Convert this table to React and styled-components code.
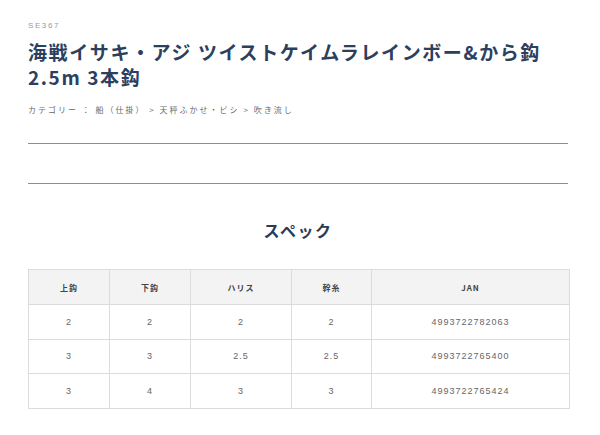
import React from "react";
import styled, { createGlobalStyle } from "styled-components";

const Global = createGlobalStyle`
  html, body { margin: 0; padding: 0; background: #fff; }
  body { font-family: "Noto Sans CJK JP", "Noto Sans", sans-serif; }
`;

const Page = styled.div`
  width: 600px;
  height: 435px;
  box-sizing: border-box;
  padding: 21px 32px 0 28px;
  display: flex;
  flex-direction: column;
`;

const Code = styled.div`
  font-family: "Liberation Sans", sans-serif;
  font-size: 8px;
  letter-spacing: 1.6px;
  color: #9a9a9a;
  line-height: 10px;
`;

const Title = styled.h1`
  margin: 8px 0 0;
  font-family: "Noto Sans CJK JP", sans-serif;
  font-weight: 700;
  font-size: 19px;
  line-height: 25px;
  letter-spacing: 1.6px;
  color: #2c405e;
`;

const Category = styled.div`
  margin-top: 15px;
  font-size: 8px;
  letter-spacing: 2px;
  color: #6a6a6a;
  line-height: 12px;
`;

const Rule = styled.hr`
  margin: ${(p) => p.$mt}px 0 0;
  border: 0;
  border-top: 1px solid #8d8d8d;
  width: 540px;
`;

const SpecTitle = styled.h2`
  margin: 36px 0 0;
  text-align: center;
  width: 540px;
  font-size: 16px;
  font-weight: 700;
  letter-spacing: 1.5px;
  line-height: 20px;
  color: #2c3b55;
`;

const Table = styled.table`
  margin-top: 29px;
  width: 541px;
  border-collapse: collapse;
  table-layout: fixed;
`;

const Th = styled.th`
  background: #f3f3f3;
  border: 1px solid #dcdcdc;
  height: 34px;
  padding: 0;
  font-size: 8px;
  font-weight: 700;
  letter-spacing: 1px;
  color: #444;
  text-align: center;
`;

const Td = styled.td`
  border: 1px solid #dcdcdc;
  height: 33.5px;
  padding: 0;
  font-family: "Liberation Sans", sans-serif;
  font-size: 9px;
  letter-spacing: 1px;
  color: #666;
  text-align: center;
`;

const cols = [81, 81, 101, 80, 198];
const heads = ["上鈎", "下鈎", "ハリス", "幹糸", "JAN"];
const rows = [
  ["2", "2", "2", "2", "4993722782063"],
  ["3", "3", "2.5", "2.5", "4993722765400"],
  ["3", "4", "3", "3", "4993722765424"],
];

export default function App() {
  return (
    <>
      <Global />
      <Page>
        <Code>SE367</Code>
        <Title>
          海戦イサキ・アジ ツイストケイムラレインボー&amp;から鈎
          <br />
          2.5m 3本鈎
        </Title>
        <Category>カテゴリー ： 船（仕掛） &gt; 天秤ふかせ・ビシ &gt; 吹き流し</Category>
        <Rule $mt={27} />
        <Rule $mt={39} />
        <SpecTitle>スペック</SpecTitle>
        <Table>
          <colgroup>
            {cols.map((w, i) => (
              <col key={i} style={{ width: w }} />
            ))}
          </colgroup>
          <thead>
            <tr>
              {heads.map((h) => (
                <Th key={h}>{h}</Th>
              ))}
            </tr>
          </thead>
          <tbody>
            {rows.map((r, i) => (
              <tr key={i}>
                {r.map((c, j) => (
                  <Td key={j}>{c}</Td>
                ))}
              </tr>
            ))}
          </tbody>
        </Table>
      </Page>
    </>
  );
}
